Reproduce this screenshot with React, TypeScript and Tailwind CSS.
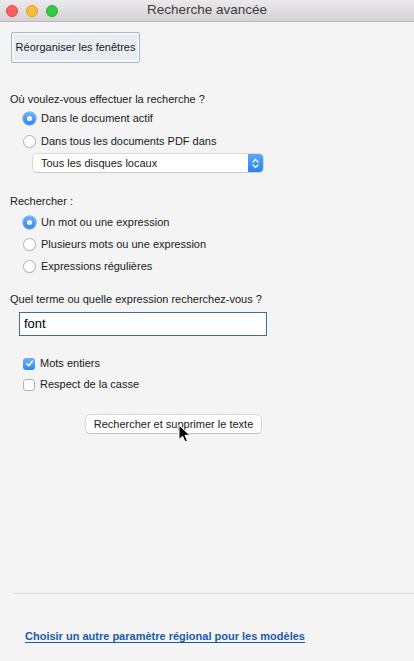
import React from "react";

const font = { fontFamily: '"Liberation Sans", Arial, sans-serif' };

function Radio({ checked, label }: { checked?: boolean; label: string }) {
  return (
    <div className="flex h-[22px] items-center pl-[23px]">
      {checked ? (
        <span className="flex h-[13px] w-[13px] items-center justify-center rounded-full bg-gradient-to-b from-[#6cb3fa] to-[#2f87f0] shadow-[0_0_0_0.5px_#3a86e0]">
          <span className="h-[5px] w-[5px] rounded-full bg-white" />
        </span>
      ) : (
        <span className="h-[13px] w-[13px] rounded-full border border-[#b4b4b4] bg-white shadow-[0_0.5px_1px_rgba(0,0,0,0.1)]" />
      )}
      <span className="ml-[5px] text-[11px] text-[#1a1a1a]">{label}</span>
    </div>
  );
}

function Check({ checked, label }: { checked?: boolean; label: string }) {
  return (
    <div className="flex h-[21px] items-center pl-[23px]">
      {checked ? (
        <span className="flex h-[12px] w-[12px] items-center justify-center rounded-[3px] bg-gradient-to-b from-[#6cb3fa] to-[#2f87f0]">
          <svg width="9" height="9" viewBox="0 0 9 9">
            <path d="M1.8 4.8 L3.7 6.7 L7.3 2.2" fill="none" stroke="white" strokeWidth="1.6" strokeLinecap="round" strokeLinejoin="round" />
          </svg>
        </span>
      ) : (
        <span className="h-[12px] w-[12px] rounded-[3px] border border-[#b4b4b4] bg-white" />
      )}
      <span className="ml-[5px] text-[11px] text-[#1a1a1a]">{label}</span>
    </div>
  );
}

export default function App() {
  return (
    <div className="flex h-[661px] w-[414px] flex-col bg-[#f4f4f4] text-[#1a1a1a]" style={font}>
      {/* Title bar */}
      <div className="relative flex h-[22px] shrink-0 items-center justify-center border-b border-[#b9b9b9] bg-gradient-to-b from-[#ebe9eb] to-[#d4d2d4]">
        <div className="absolute left-[6px] top-[5px] flex gap-[8px]">
          <span className="h-[12px] w-[12px] rounded-full border border-[#e2463f] bg-[#fc605c]" />
          <span className="h-[12px] w-[12px] rounded-full border border-[#e1a116] bg-[#fdbc40]" />
          <span className="h-[12px] w-[12px] rounded-full border border-[#2dac2f] bg-[#34c84a]" />
        </div>
        <span className="text-[13.5px] text-[#3c3c3c]">Recherche avancée</span>
      </div>

      <div className="flex flex-1 flex-col">
        <div className="pl-[11px] pt-[10px]">
          <div className="flex h-[31px] w-[129px] items-center justify-center whitespace-nowrap rounded-[2px] border border-[#a9b4c4] bg-[#e9ecf1] shadow-[inset_0_0_0_2px_#f6f7f9] text-[11px]">
            Réorganiser les fenêtres
          </div>
        </div>

        <div className="mt-[28px] flex h-[16px] items-center pl-[10px] text-[11px]">
          Où voulez-vous effectuer la recherche ?
        </div>
        <Radio checked label="Dans le document actif" />
        <div className="mt-[1px]">
          <Radio label="Dans tous les documents PDF dans" />
        </div>
        <div className="ml-[33px] mt-[2px] flex h-[18px] w-[230px] items-stretch overflow-hidden rounded-[4px] bg-white shadow-[0_0_0_0.5px_#bdbdbd,0_1px_1px_rgba(0,0,0,0.12)]">
          <span className="flex flex-1 items-center pl-[8px] text-[11px]">Tous les disques locaux</span>
          <span className="flex w-[15px] items-center justify-center bg-gradient-to-b from-[#5aa7fa] to-[#2c82ef]">
            <svg width="7" height="11" viewBox="0 0 7 11">
              <path d="M1 4 L3.5 1.5 L6 4 M1 7 L3.5 9.5 L6 7" fill="none" stroke="white" strokeWidth="1.3" strokeLinecap="round" strokeLinejoin="round" />
            </svg>
          </span>
        </div>

        <div className="mt-[21px] flex h-[16px] items-center pl-[10px] text-[11px]">Rechercher :</div>
        <div className="mt-[2px]">
          <Radio checked label="Un mot ou une expression" />
          <Radio label="Plusieurs mots ou une expression" />
          <Radio label="Expressions régulières" />
        </div>

        <div className="mt-[14px] flex h-[16px] items-center pl-[10px] text-[11px]">
          Quel terme ou quelle expression recherchez-vous ?
        </div>
        <div className="ml-[19px] mt-[5px] flex h-[24px] w-[248px] items-center border border-[#3f6b9f] bg-white pl-[4px] text-[13px] text-black">
          font
        </div>

        <div className="mt-[17px]">
          <Check checked label="Mots entiers" />
          <Check label="Respect de la casse" />
        </div>

        <div className="relative ml-[86px] mt-[20px] flex h-[18px] w-[175px] items-center justify-center rounded-[4px] bg-white text-[11px] shadow-[0_0_0_0.5px_#b8b8b8,0_1px_1px_rgba(0,0,0,0.15)]">
          Rechercher et supprimer le texte
          <svg className="absolute left-[92px] top-[9px]" width="13" height="19" viewBox="0 0 13 19">
            <path d="M1 1 L1 15.5 L4.5 12.2 L7 17.8 L9.4 16.8 L7 11.3 L11.8 11.3 Z" fill="black" stroke="white" strokeWidth="1" strokeLinejoin="round" />
          </svg>
        </div>
      </div>

      <div className="ml-[14px] h-[1px] shrink-0 bg-[#d9d9d9]" />
      <div className="flex h-[67px] shrink-0 items-start pl-[25px] pt-[34px]">
        <span className="text-[11px] font-bold text-[#1c5ba5] underline underline-offset-[2px]">
          Choisir un autre paramètre régional pour les modèles
        </span>
      </div>
    </div>
  );
}
